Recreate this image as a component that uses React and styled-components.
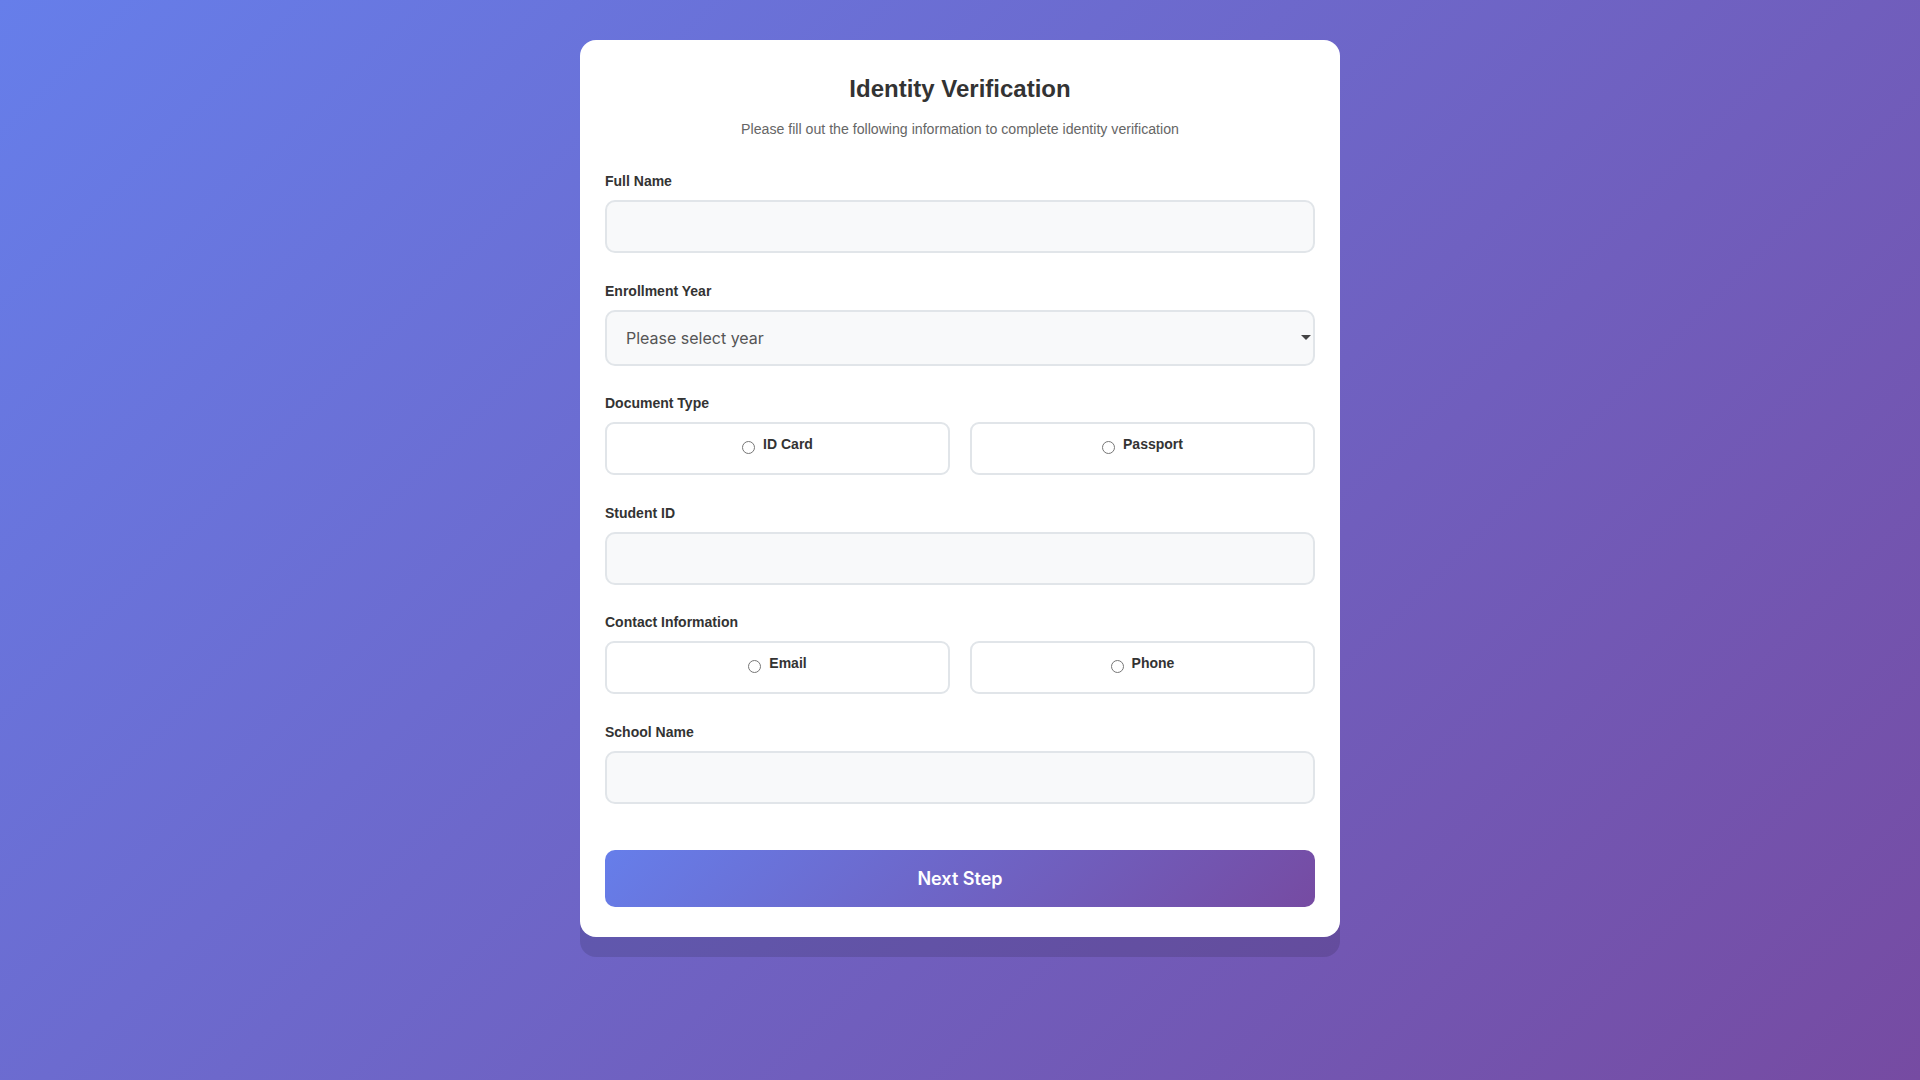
import React from 'react';
import styled, { createGlobalStyle } from 'styled-components';

const GlobalStyle = createGlobalStyle`
  html, body {
    margin: 0;
    padding: 0;
  }
  body {
    font-family: "Liberation Sans", Arial, sans-serif;
    color: #333;
  }
  * {
    box-sizing: border-box;
  }
`;

const Page = styled.div`
  min-height: 100vh;
  background: linear-gradient(135deg, #667eea 0%, #764ba2 100%);
  display: flex;
  justify-content: center;
  align-items: flex-start;
  padding-top: 40px;
`;

const Card = styled.div`
  width: 760px;
  background: #fff;
  border-radius: 16px;
  padding: 34.5px 25px 30px;
  box-shadow: 0 20px 0 rgba(0, 0, 0, 0.12);
`;

const Header = styled.div`
  text-align: center;
  margin-bottom: 36.5px;
  h1 {
    margin: 0 0 18.3px;
    font-size: 24px;
    line-height: 28px;
    font-weight: 700;
    color: #333;
  }
  p {
    margin: 0;
    font-size: 14.15px;
    line-height: 16px;
    color: #666;
  }
`;

const Group = styled.div`
  margin-bottom: 29.5px;
`;

const Label = styled.label`
  display: block;
  font-size: 14px;
  line-height: 16px;
  font-weight: 700;
  color: #333;
  margin-bottom: 11px;
`;

const TextInput = styled.input`
  display: block;
  width: 100%;
  height: 53px;
  padding: 0 18px;
  border: 2px solid #e1e5e9;
  border-radius: 10px;
  background: #f8f9fa;
  font-family: Inter, "Liberation Sans", sans-serif;
  font-size: 16px;
  color: #333;
  outline: none;
`;

const SelectWrap = styled.div`
  position: relative;
  svg {
    position: absolute;
    right: 4px;
    top: 50%;
    margin-top: -2.5px;
    pointer-events: none;
  }
`;

const Select = styled.select`
  display: block;
  width: 100%;
  height: 56px;
  padding: 0 30px 0 19px;
  border: 2px solid #e1e5e9;
  border-radius: 10px;
  background: #f8f9fa;
  font-family: Inter, "Liberation Sans", sans-serif;
  font-size: 16px;
  color: #555;
  appearance: none;
  -webkit-appearance: none;
  outline: none;
`;

const Options = styled.div`
  display: grid;
  grid-template-columns: 1fr 1fr;
  gap: 20px;
`;

const Option = styled.label`
  display: flex;
  justify-content: center;
  align-items: flex-start;
  height: 53px;
  padding: 12px 15px 0;
  border: 2px solid #e1e5e9;
  border-radius: 9px;
  background: #fff;
  cursor: pointer;
  input {
    width: 13px;
    height: 13px;
    margin: 5px 8px 0 0;
  }
  span {
    font-size: 14px;
    line-height: 16px;
    font-weight: 700;
    color: #333;
  }
`;

const Submit = styled.button`
  display: block;
  width: 100%;
  height: 57px;
  margin-top: 46px;
  border: none;
  border-radius: 10px;
  background: linear-gradient(135deg, #667eea 0%, #764ba2 100%);
  color: #fff;
  font-family: Inter, "Liberation Sans", sans-serif;
  font-size: 18px;
  font-weight: 600;
  cursor: pointer;
`;

const Choice = ({ name, value, children }) => (
  <Option>
    <input type="radio" name={name} value={value} />
    <span>{children}</span>
  </Option>
);

export default function App() {
  return (
    <>
      <GlobalStyle />
      <Page>
        <Card>
          <Header>
            <h1>Identity Verification</h1>
            <p>Please fill out the following information to complete identity verification</p>
          </Header>

          <Group>
            <Label>Full Name</Label>
            <TextInput type="text" />
          </Group>

          <Group>
            <Label>Enrollment Year</Label>
            <SelectWrap>
              <Select defaultValue="">
                <option value="">Please select year</option>
                <option value="2024">2024</option>
                <option value="2023">2023</option>
                <option value="2022">2022</option>
              </Select>
              <svg width="10" height="5" viewBox="0 0 10 5">
                <path d="M0 0h10L5 5z" fill="#444" />
              </svg>
            </SelectWrap>
          </Group>

          <Group>
            <Label>Document Type</Label>
            <Options>
              <Choice name="doc" value="id">ID Card</Choice>
              <Choice name="doc" value="passport">Passport</Choice>
            </Options>
          </Group>

          <Group>
            <Label>Student ID</Label>
            <TextInput type="text" />
          </Group>

          <Group>
            <Label>Contact Information</Label>
            <Options>
              <Choice name="contact" value="email">Email</Choice>
              <Choice name="contact" value="phone">Phone</Choice>
            </Options>
          </Group>

          <Group>
            <Label>School Name</Label>
            <TextInput type="text" />
          </Group>

          <Submit type="button">Next Step</Submit>
        </Card>
      </Page>
    </>
  );
}
